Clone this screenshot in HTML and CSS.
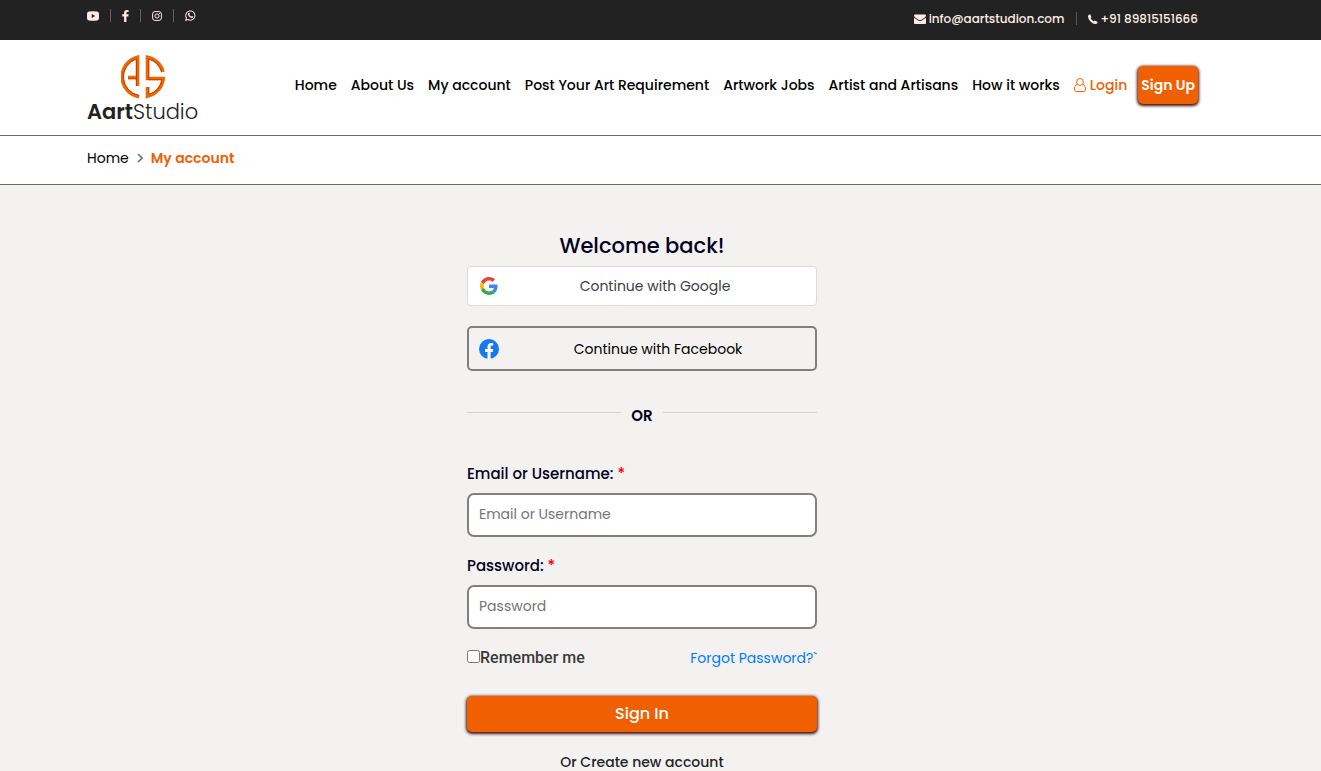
FILE: index.html
```html
<!DOCTYPE html>
<html lang="en">
<head>
<meta charset="utf-8">
<meta name="viewport" content="width=device-width, initial-scale=1">
<title>My account - AartStudio</title>
<link rel="stylesheet" href="styles.css">
</head>
<body>
<div class="topbar">
  <div class="container topbar-row">
    <ul class="social">
      <li><a href="#" aria-label="YouTube"><svg width="12" height="12" viewBox="0 0 12 12"><path fill="currentColor" fill-rule="evenodd" d="M2 1.5Q6 1.1 10 1.5Q11.7 1.6 11.9 3.2Q12.1 6 11.9 8.8Q11.7 10.4 10 10.5Q6 10.9 2 10.5Q.3 10.4.1 8.8Q-.1 6 .1 3.2Q.3 1.6 2 1.5ZM4.7 3.9V8.1L8.2 6Z"/></svg></a></li>
      <li><a href="#" aria-label="Facebook"><svg width="7" height="12" viewBox="0 0 7 12"><path fill="currentColor" d="M6.6.2V2.1H5.4Q4.4 2.1 4.4 3V4.3H6.6L6.3 6.4H4.4V12H2.1V6.4H.2V4.3H2.1V2.7Q2.1 0 4.9 0Q6 0 6.6.2Z"/></svg></a></li>
      <li><a href="#" aria-label="Instagram"><svg width="10" height="10" viewBox="0 0 12 12" fill="none" stroke="currentColor" stroke-width="1.2"><rect x=".7" y=".7" width="10.6" height="10.6" rx="3"/><circle cx="6" cy="6" r="2.5"/><circle cx="9" cy="3" r=".7" fill="currentColor" stroke="none"/></svg></a></li>
      <li><a href="#" aria-label="WhatsApp"><svg width="11" height="11" viewBox="0 0 12 12"><path fill="none" stroke="currentColor" stroke-width="1.1" d="M.8 11.2L1.5 8.6A5 5 0 1 1 3.5 10.5Z"/><path fill="currentColor" d="M4.2 3.1Q4.6 2.9 4.8 3.3L5.2 4.4Q5.2 4.7 4.8 5.1Q5.500 6.600 7 7.200L7.600 6.500L9 7.200Q9 8.700 7.400 8.800Q4 8.300 3.200 4.700Q3.200 3.600 4.200 3.100Z"/></svg></a></li>
    </ul>
    <ul class="contact">
      <li><a href="mailto:info@aartstudion.com"><svg width="12" height="12" viewBox="0 0 12 12"><path fill="currentColor" d="M1 1.500H11Q12 1.500 12 2.600Q12 3.500 10.800 4.400L7 6.900Q6 7.600 5 6.900L1.200 4.400Q0 3.500 0 2.600Q0 1.500 1 1.500ZM0 4.700L4.600 7.800Q6 8.700 7.400 7.800L12 4.700V10Q12 11 11 11H1Q0 11 0 10Z"/></svg>info@aartstudion.com</a></li>
      <li><a href="tel:+9189815151666"><svg width="10" height="12" viewBox="0 0 10 12"><path fill="currentColor" d="M0 3.400Q0 1.600 2.100 1.300L3.500 4Q3.300 4.500 2.500 5.100Q3.500 7.300 5.900 8.400Q6.600 7.400 7 7.400L9.700 8.900Q9.500 11 7.500 11Q5 11 2.500 8.500Q0 6 0 3.400Z"/></svg>+91 89815151666</a></li>
    </ul>
  </div>
</div>

<header class="header">
  <div class="container header-row">
    <a class="logo" href="#">
      <svg width="44" height="44" viewBox="0 0 44 44" fill="none" aria-hidden="true">
        <g stroke="#f26500" stroke-width="3.600"><path d="M16.500 31V2.200A20.200 20.200 0 0 0 18 41.700M7 22.500H16.500"/><path d="M42 17A20.200 20.200 0 0 0 26.500 2.200V23.500H42.200A20.200 20.200 0 0 1 26.500 41.200V32"/></g>
        <g stroke="#b84400" stroke-width="1"><path d="M15.500 31V3.900A18.800 18.800 0 0 0 18 40.400M7 23.700H15.500"/><path d="M40.600 17A19 19 0 0 0 27.700 3.900V24.700H41A19 19 0 0 1 27.700 39.400V32"/></g>
      </svg>
      <span class="logo-name"><b>Aart</b>Studio</span>
    </a>
    <nav class="nav">
      <a href="#">Home</a>
      <a href="#">About Us</a>
      <a href="#">My account</a>
      <a href="#">Post Your Art Requirement</a>
      <a href="#">Artwork Jobs</a>
      <a href="#">Artist and Artisans</a>
      <a href="#">How it works</a>
      <a class="login" href="#"><svg width="12" height="14" viewBox="0 0 12 14" fill="none" stroke="currentColor"><circle cx="6" cy="4" r="3.400"/><path d="M3 6.200Q.5 7 .5 11Q.6 13.500 2.500 13.500H9.500Q11.400 13.500 11.500 11Q11.500 7 9 6.200"/></svg>Login</a>
      <a class="signup" href="#">Sign Up</a>
    </nav>
  </div>
</header>

<nav class="breadcrumb" aria-label="Breadcrumb">
  <div class="container crumbs">
    <a href="#">Home</a>
    <svg width="6" height="10" viewBox="0 0 6 10" fill="none" stroke="#6c757d" stroke-width="1.600"><path d="M1 1L5 5L1 9"/></svg>
    <span class="current">My account</span>
  </div>
</nav>

<main class="main">
  <form class="card">
    <h1>Welcome back!</h1>
    <button class="google" type="button">
      <svg width="18" height="18" viewBox="0 0 48 48"><path fill="#EA4335" d="M24 9.500c3.540 0 6.710 1.220 9.210 3.600l6.850-6.850C35.900 2.380 30.470 0 24 0 14.620 0 6.510 5.380 2.560 13.220l7.980 6.190C12.430 13.720 17.740 9.500 24 9.500z"/><path fill="#4285F4" d="M46.980 24.550c0-1.570-.15-3.090-.38-4.550H24v9.020h12.940c-.58 2.960-2.260 5.480-4.780 7.180l7.730 6c4.510-4.180 7.090-10.360 7.090-17.650z"/><path fill="#FBBC05" d="M10.530 28.590c-.48-1.450-.76-2.990-.76-4.590s.27-3.140.76-4.590l-7.980-6.190C.92 16.460 0 20.120 0 24c0 3.880.92 7.540 2.560 10.780l7.970-6.190z"/><path fill="#34A853" d="M24 48c6.480 0 11.930-2.130 15.890-5.810l-7.730-6c-2.150 1.450-4.920 2.300-8.160 2.300-6.260 0-11.570-4.220-13.470-9.910l-7.980 6.190C6.510 42.620 14.620 48 24 48z"/></svg>
      <span>Continue with Google</span>
    </button>
    <button class="facebook" type="button">
      <svg width="20" height="20" viewBox="0 0 20 20"><circle cx="10" cy="10" r="10" fill="#1877f2"/><path fill="#fff" d="M8.500 20V12.900H6V10H8.500V7.800Q8.500 4 12.200 4L14.200 4.200V6.600H13Q11.600 6.600 11.600 8V10H14.200L13.700 12.900H11.600V20Z"/></svg>
      <span>Continue with Facebook</span>
    </button>
    <div class="divider"><span>OR</span></div>

    <label class="label" for="user">Email or Username: <span class="req">*</span></label>
    <input class="field" id="user" type="text" placeholder="Email or Username">
    <label class="label" for="pass">Password: <span class="req">*</span></label>
    <input class="field" id="pass" type="password" placeholder="Password">

    <div class="options">
      <label class="remember" for="remember"><input id="remember" type="checkbox">Remember me</label>
      <a href="#">Forgot Password?`</a>
    </div>
    <button class="signin" type="submit">Sign In</button>
    <p class="create">Or Create new account</p>
  </form>
</main>
</body>
</html>
```

FILE: styles.css
```css
* { box-sizing: border-box; }
body {
  margin: 0;
  background: #f3f2f0;
  color: #212529;
  font: 400 14px/20px Poppins, Inter, sans-serif;
  overflow-x: hidden;
}
a { color: inherit; text-decoration: none; }
ul { list-style: none; margin: 0; padding: 0; }
svg { flex: none; }
button, input { font: inherit; }
button { cursor: pointer; }

.container { padding: 0 123px 0 87px; }

.topbar { background: #222; color: #fdece6; height: 40px; }
.topbar-row { display: flex; justify-content: space-between; }
.social, .contact { display: flex; }
.social { padding-top: 9px; }
.social li { display: flex; height: 13px; }
.social a, .contact a { display: flex; align-items: center; }
.social li + li { margin-left: 11px; padding-left: 11px; border-left: 1px solid #6b5f5b; }
.contact { padding-top: 12px; font-size: 12px; font-weight: 500; }
.contact li { display: flex; height: 13px; }
.contact a { gap: 3px; }
.contact li + li { margin-left: 11px; padding-left: 11px; border-left: 1px solid #5c5552; }

.header { background: #fff; border-bottom: 1px solid #6a6a6a; }
.header-row { display: flex; justify-content: space-between; height: 95px; }
.logo { display: flex; flex-direction: column; align-items: center; padding-top: 15px; }
.logo-name { font-size: 21px; line-height: 26px; font-weight: 300; color: #222; }
.logo-name b { font-weight: 600; }
.nav {
  display: flex;
  align-items: center;
  gap: 14px;
  height: 90px;
  color: #000;
  font-weight: 500;
  white-space: nowrap;
}
.login { display: flex; align-items: center; gap: 4px; color: #f06000; }
.signup {
  margin-left: -3px;
  padding: 9px 3px;
  border-radius: 5px;
  background: #f06000;
  color: #fff;
  font-weight: 600;
  box-shadow: 0 1px 3px 1px #3f0d12;
}

.breadcrumb { background: #fff; border-bottom: 1px solid #6a6a6a; }
.crumbs { display: flex; align-items: center; gap: 8px; height: 48px; padding-bottom: 4px; color: #000; }
.current { color: #f06000; font-weight: 600; }

.main { display: flex; justify-content: center; padding: 46px 37px 30px 0; }
.card { display: flex; flex-direction: column; width: 350px; }
.card h1 { margin: 0 0 5px; font-size: 21px; line-height: 30px; font-weight: 500; text-align: center; color: #02021e; }
.google, .facebook { display: flex; align-items: center; }
.google span, .facebook span { flex: 1; text-align: center; }
.google {
  height: 40px;
  gap: 8px;
  padding: 0 12px;
  border: 1px solid #dadce0;
  border-radius: 4px;
  background: #fff;
  color: #3c4043;
}
.facebook {
  height: 45px;
  gap: 12px;
  margin-top: 20px;
  padding: 0 10px;
  border: 2px solid gray;
  border-radius: 5px;
  background: transparent;
  color: #000;
}
.divider {
  display: flex;
  gap: 10px;
  margin: 35px 0 38px;
  color: #02021e;
  font-size: 15px;
  font-weight: 600;
}
.divider::before, .divider::after { content: ""; flex: 1; margin-top: 6px; border-top: 1px solid #d2d2d0; }
.label { margin-bottom: 9px; color: #02021e; font-size: 15px; font-weight: 500; }
.req { color: red; }
.field {
  width: 100%;
  height: 44px;
  margin-bottom: 19px;
  padding: 0 10px 2px;
  border: 2px solid gray;
  border-radius: 7px;
  background: #fff;
}
.field::placeholder { color: #757575; opacity: 1; }
.options { display: flex; justify-content: space-between; }
.options a { color: #007bff; }
.remember { display: flex; color: #3a3a3a; font-family: Roboto, sans-serif; font-size: 16px; font-weight: 500; }
.remember input { width: 13px; height: 13px; margin: 2px 0 0; }
.signin {
  height: 36px;
  margin-top: 28px;
  padding: 0;
  border: 0;
  border-radius: 5px;
  background: #f06000;
  color: #fff;
  font-size: 16px;
  font-weight: 500;
  box-shadow: 0 1px 3px 1px #3f0d12;
}
.create { margin: 20px 0 0; text-align: center; font-weight: 500; }
```
